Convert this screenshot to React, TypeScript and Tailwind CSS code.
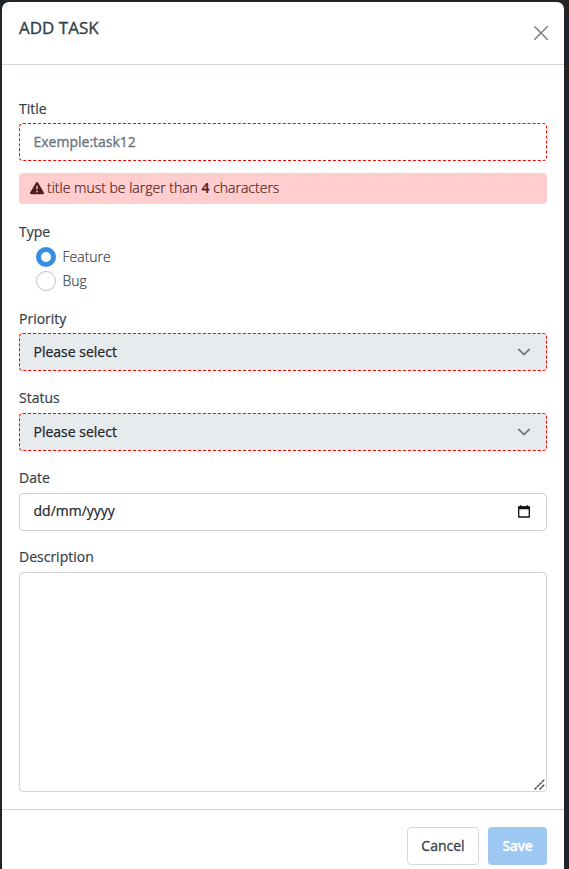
import React from "react";

function Chevron() {
  return (
    <svg width="14" height="14" viewBox="0 0 16 16" fill="none" stroke="#6f7880" strokeWidth="2" strokeLinecap="round" strokeLinejoin="round">
      <path d="m2 5 6 6 6-6" />
    </svg>
  );
}

function Label({ children }: { children: React.ReactNode }) {
  return <div className="h-[25px] text-sm leading-[21px] text-[#343e46] [-webkit-text-stroke:0.2px]">{children}</div>;
}

function Select({ label }: { label: string }) {
  return (
    <div>
      <Label>{label}</Label>
      <div className="flex h-[38px] items-center justify-between rounded-[4px] border border-dashed border-[#ff0000] bg-[#e8ebed] pr-[15px] pl-[13.5px] text-sm text-[#20252a]">
        <span className="[-webkit-text-stroke:0.25px]">Please select</span>
        <Chevron />
      </div>
    </div>
  );
}

export default function App() {
  return (
    <div className="h-[869px] w-[569px] overflow-hidden bg-[#20252a] pt-[2px] pl-[2px] font-['Open_Sans',sans-serif]">
      <div className="flex h-[880px] w-[562px] flex-col rounded-[7px] bg-white">
        <header className="flex h-[63px] shrink-0 justify-between border-b border-[#ced4da] pr-[16px] pl-[17px]">
          <h1 className="pt-[14px] text-[17px] leading-6 text-[#343e46] [-webkit-text-stroke:0.35px]">ADD TASK</h1>
          <svg className="mt-[24px]" width="14" height="14" viewBox="0 0 14 14" stroke="#808080" strokeWidth="1.6" strokeLinecap="round">
            <path d="m.8.8 12.4 12.4M13.2.8.8 13.2" />
          </svg>
        </header>
        <main className="flex h-[744px] shrink-0 flex-col px-[17px] pt-[33px]">
          <Label>Title</Label>
          <div className="flex h-[38px] shrink-0 items-center rounded-[4px] border border-dashed border-[#ff0000] pl-[13.5px] text-sm text-[#6c757d] [-webkit-text-stroke:0.35px]">Exemple:task12</div>
          <div className="mt-[12px] flex h-[31px] shrink-0 items-center gap-[3px] rounded-[4px] bg-[#ffcdcd] pb-px pl-[11px] text-sm font-light text-[#4d1d1d]">
            <svg width="14" height="14" viewBox="0 0 512 512" fill="currentColor">
              <path d="M256 32c14.200 0 27.300 7.500 34.500 19.800l216 368c7.300 12.400 7.300 27.700.2 40.100S486.300 480 472 480H40c-14.300 0-27.600-7.700-34.700-20.100s-7-27.800.2-40.100l216-368C228.700 39.500 241.800 32 256 32zm0 128c-13.300 0-24 10.700-24 24v112c0 13.300 10.700 24 24 24s24-10.700 24-24V184c0-13.300-10.700-24-24-24zm32 224a32 32 0 1 0-64 0 32 32 0 1 0 64 0z" />
            </svg>
            <span className="[-webkit-text-stroke:0.2px]">title must be larger than <b className="font-semibold">4</b> characters</span>
          </div>
          <div className="mt-[17px] h-[87px] shrink-0">
            <Label>Type</Label>
            <div className="flex flex-col gap-[3px] pl-[17px] text-sm leading-[21px] font-light text-[#343e46] [-webkit-text-stroke:0.2px]">
              <div className="flex items-center gap-[6.500px]">
                <span className="size-5 rounded-full border-[5.500px] border-[#348fe2] bg-white" />
                Feature
              </div>
              <div className="flex items-center gap-[6.500px]">
                <span className="size-5 rounded-full border border-[#bfbfbf] bg-white" />
                Bug
              </div>
            </div>
          </div>
          <Select label="Priority" />
          <div className="mt-[16px]">
            <Label>Status</Label>
            <div className="mt-px flex h-[38px] items-center justify-between rounded-[4px] border border-dashed border-[#ff0000] bg-[#e8ebed] pr-[15px] pl-[13.5px] text-sm text-[#20252a]">
              <span className="[-webkit-text-stroke:0.25px]">Please select</span>
              <Chevron />
            </div>
          </div>
          <div className="mt-[16px]">
            <Label>Date</Label>
            <div className="mt-px flex h-[38px] items-center justify-between rounded-[4px] border border-[#ced4da] pr-[16px] pb-[2px] pl-[13.5px] text-sm text-[#20252a]">
              <span className="[-webkit-text-stroke:0.2px]">dd/mm/yyyy</span>
              <svg className="mt-px" width="12" height="13" viewBox="0 0 12 13" fill="none">
                <path d="M.7 2h10.600v10H.7z" stroke="#111" strokeWidth="1.300" strokeLinejoin="round" />
                <path d="M0 1.500h12v2.700H0zM2 .3h1.400V2H2zM8.600.3H10V2H8.600z" fill="#111" />
              </svg>
            </div>
          </div>
          <div className="mt-[15px]">
            <Label>Description</Label>
            <div className="mt-px flex h-[220px] items-end justify-end rounded-[4px] border border-[#ced4da] pr-[1px] pb-[1px]">
              <svg width="11" height="11" viewBox="0 0 11 11" stroke="#505050" strokeWidth="1.500">
                <path d="m.5 10.500 10-10M5.500 10.500l5-5" strokeDasharray="3 .5" />
              </svg>
            </div>
          </div>
        </main>
        <footer className="flex shrink-0 justify-end gap-[9px] border-t border-[#ced4da] pt-[17px] pr-[17px] text-sm">
          <button className="h-[38px] w-[72px] rounded-[4px] border border-[#d3d8dc] text-[#343e46] [-webkit-text-stroke:0.3px]">Cancel</button>
          <button className="h-[38px] w-[59px] rounded-[4px] bg-[#9dc8f1] font-semibold tracking-[-0.3px] text-white [-webkit-text-stroke:0.3px]">Save</button>
        </footer>
      </div>
    </div>
  );
}
